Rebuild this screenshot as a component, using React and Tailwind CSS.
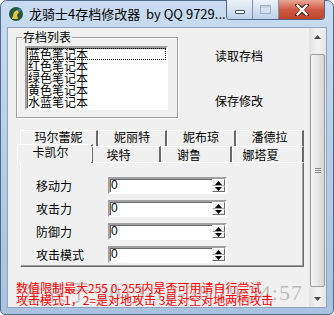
import React from "react";

function Spinner() {
  return (
    <div className="w-[13px] h-[13px] flex flex-col">
      <div className="h-[7px] bg-[#f0f0f0] border border-t-white border-l-white border-r-[#696969] border-b-[#a0a0a0] flex items-center justify-center">
        <svg width="7" height="4" viewBox="0 0 7 4"><path d="M0 4 L3.5 0 L7 4 Z" fill="#000" /></svg>
      </div>
      <div className="h-[6px] bg-[#f0f0f0] border border-t-white border-l-white border-r-[#696969] border-b-[#696969] flex items-center justify-center">
        <svg width="7" height="4" viewBox="0 0 7 4"><path d="M0 0 L3.5 4 L7 0 Z" fill="#000" /></svg>
      </div>
    </div>
  );
}

function Field({ label }) {
  return (
    <div className="flex items-center h-[17px]">
      <div className="w-[72px] text-[12px] leading-[14px] text-black">{label}</div>
      <div className="w-[119px] h-[17px] bg-white border-2 border-t-[#a0a0a0] border-l-[#a0a0a0] border-r-white border-b-white shadow-[inset_1px_1px_0_#696969] flex items-center">
        <span className="ml-[1px] text-[12px] leading-[13px] text-black font-['Liberation_Sans',sans-serif]">0</span>
        <div className="ml-auto">
          <Spinner />
        </div>
      </div>
    </div>
  );
}

export default function App() {
  const items = ["蓝色笔记本", "红色笔记本", "绿色笔记本", "黄色笔记本", "水蓝笔记本"];
  return (
    <div className="w-[334px] h-[315px] overflow-hidden bg-white">
      <div className="w-[334px] h-[315px] rounded-t-[7px] rounded-b-[5px] border border-[#51698b] bg-gradient-to-b from-[#c9dcf0] via-[#b6cde7] to-[#a8c2df] flex flex-col font-['Noto_Sans_CJK_SC',sans-serif]">
        {/* title bar */}
        <div className="h-[27px] flex items-start">
          <div className="ml-[7px] mt-[5px] w-[16px] h-[16px]">
            <svg width="16" height="16" viewBox="0 0 16 16">
              <circle cx="8" cy="8" r="7" fill="#24573f" />
              <path d="M4 13 L6 6 L9 4 L11 6 L9 9 L10 13 Z" fill="#e7c53a" />
              <path d="M9 4 L13 2 L12 6 Z" fill="#3a8ad0" />
            </svg>
          </div>
          <div className="ml-[5px] mt-[4px] text-[13px] leading-[17px] text-black whitespace-nowrap">
            龙骑士4存档修改器&nbsp; by QQ 9729...
          </div>
          <div className="ml-auto mr-[8px] -mt-[1px] flex h-[20px] rounded-b-[4px] border border-t-0 border-[#4f6889] overflow-hidden">
            <div className="w-[26px] h-full bg-gradient-to-b from-[#eef3fa] via-[#d6e2f0] to-[#bfd2e8] border-r border-[#7c93b3] flex items-end justify-center pb-[5px]">
              <div className="w-[10px] h-[4px] bg-white border border-[#3d5272] rounded-[1px]" />
            </div>
            <div className="w-[26px] h-full bg-gradient-to-b from-[#eef3fa] via-[#d6e2f0] to-[#bfd2e8] border-r border-[#7c93b3] flex items-center justify-center">
              <div className="w-[11px] h-[9px] border border-[#9fb0c6] bg-transparent shadow-[inset_0_2px_0_#c8d3e0]" />
            </div>
            <div className="w-[45px] h-full bg-gradient-to-b from-[#e8a597] via-[#cf5a44] to-[#c0432c] flex items-center justify-center">
              <svg width="14" height="12" viewBox="0 0 14 12">
                <path d="M2 1 L7 5 L12 1 M2 11 L7 7 L12 11" stroke="#5a2418" strokeWidth="4" fill="none" strokeLinecap="round" />
                <path d="M2.5 1.5 L11.5 10.5 M11.5 1.5 L2.5 10.5" stroke="#fff" strokeWidth="2.4" fill="none" strokeLinecap="round" />
              </svg>
            </div>
          </div>
        </div>

        {/* client */}
        <div className="mx-[7px] h-[279px] bg-[#f0f0f0] flex shadow-[0_0_0_1px_#8da3bf]">
          <div className="w-[301px] h-full flex flex-col relative">
            {/* top section */}
            <div className="h-[102px] flex items-start">
              <div className="ml-[8px] mt-[9px] w-[162px] h-[81px] relative border border-[#a0a0a0] shadow-[1px_1px_0_#fff,inset_1px_1px_0_#fff]">
                <div className="absolute left-[5px] -top-[8px] px-[1px] bg-[#f0f0f0] text-[12px] leading-[14px] text-black">存档列表</div>
                <div className="ml-[8px] mt-[8px] w-[143px] h-[64px] bg-white border-2 border-t-[#a0a0a0] border-l-[#a0a0a0] border-r-white border-b-white shadow-[inset_1px_1px_0_#696969] flex flex-col">
                  {items.map((t, i) => (
                    <div
                      key={t}
                      className={
                        i === 0
                          ? "h-[12px] text-[12px] leading-[12px] text-black outline outline-1 outline-dotted outline-black -outline-offset-1 pl-[1px] whitespace-nowrap"
                          : "h-[12px] text-[12px] leading-[12px] text-black pl-[1px] whitespace-nowrap"
                      }
                    >
                      {t}
                    </div>
                  ))}
                </div>
              </div>
              <div className="ml-[37px] pt-[22px] flex flex-col">
                <div className="text-[12px] leading-[12px] text-black">读取存档</div>
                <div className="mt-[33px] text-[12px] leading-[12px] text-black">保存修改</div>
              </div>
            </div>

            {/* tabs back row */}
            <div className="ml-[12px] flex h-[16px]">
              <div className="w-[78px] h-[16px] border-t border-l border-white border-r-2 border-r-[#696969] rounded-tl-[2px] flex items-start justify-center text-[12px] leading-[12px] text-black">玛尔蕾妮</div>
              <div className="w-[69px] h-[16px] border-t border-l border-white border-r-2 border-r-[#696969] rounded-tl-[2px] flex items-start justify-center text-[12px] leading-[12px] text-black">妮丽特</div>
              <div className="w-[69px] h-[16px] border-t border-l border-white border-r-2 border-r-[#696969] rounded-tl-[2px] flex items-start justify-center text-[12px] leading-[12px] text-black">妮布琼</div>
              <div className="w-[68px] h-[16px] border-t border-l border-white border-r-2 border-r-[#696969] rounded-tl-[2px] flex items-start justify-center text-[12px] leading-[12px] text-black">潘德拉</div>
            </div>
            {/* tabs front row */}
            <div className="ml-[12px] flex h-[16px] relative z-10">
              <div className="-ml-[3px] -mr-[2px] -mt-[2px] w-[76px] h-[19px] bg-[#f0f0f0] border-t border-l border-white border-r-2 border-r-[#696969] rounded-tl-[2px] flex items-start justify-center pt-[1px] pr-[8px] text-[12px] leading-[12px] text-black">卡凯尔</div>
              <div className="w-[70px] h-[16px] border-t border-l border-white border-r-2 border-r-[#696969] rounded-tl-[2px] flex items-center justify-center pr-[14px] text-[12px] leading-[12px] text-black">埃特</div>
              <div className="w-[71px] h-[16px] border-t border-l border-white border-r-2 border-r-[#696969] rounded-tl-[2px] flex items-center justify-center pr-[14px] text-[12px] leading-[12px] text-black">谢鲁</div>
              <div className="w-[72px] h-[16px] border-t border-l border-white border-r-2 border-r-[#696969] rounded-tl-[2px] flex items-center justify-center pr-[14px] text-[12px] leading-[12px] text-black">娜塔夏</div>
            </div>
            {/* panel */}
            <div className="ml-[12px] w-[284px] h-[105px] border border-t-white border-l-white border-r-[#696969] border-b-[#696969] shadow-[inset_-1px_-1px_0_#a0a0a0] pt-[14px] pl-[15px] flex flex-col gap-[6px]">
              <Field label="移动力" />
              <Field label="攻击力" />
              <Field label="防御力" />
              <Field label="攻击模式" />
            </div>

            {/* watermark (behind notes) */}
            <div className="absolute left-[14px] top-[251px] text-[22px] leading-[28px] tracking-[1px] text-[#9a9a9a]/60 font-['Liberation_Serif',serif] whitespace-nowrap pointer-events-none">
              发表于 2013-12-28 19:34:57
            </div>
            {/* red notes */}
            <div className="relative ml-[8px] mt-[15px] flex flex-col text-[12px] leading-[12px] text-[#f00] whitespace-nowrap">
              <div>数值限制最大255 0-255内是否可用请自行尝试</div>
              <div>攻击模式1，2=是对地攻击 3是对空对地两栖攻击</div>
            </div>
          </div>

          {/* scrollbar */}
          <div className="w-[17px] h-full flex flex-col bg-gradient-to-r from-[#e3e3e3] via-[#f2f2f2] to-[#e6e6e6]">
            <div className="h-[17px] flex items-center justify-center">
              <svg width="7" height="4" viewBox="0 0 7 4"><path d="M0 4 L3.5 0 L7 4 Z" fill="#4a4a4a" /></svg>
            </div>
            <div className="h-[9px]" />
            <div className="mx-[1px] h-[233px] rounded-[2px] border border-[#9c9c9c] bg-gradient-to-r from-[#f4f4f4] via-[#e8e8e8] to-[#d4d4d4] flex flex-col items-center justify-center gap-[1px]">
              <div className="w-[6px] h-[1px] bg-[#8a8a8a]" />
              <div className="w-[6px] h-[1px] bg-[#8a8a8a]" />
              <div className="w-[6px] h-[1px] bg-[#8a8a8a]" />
            </div>
            <div className="h-[3px]" />
            <div className="h-[17px] flex items-center justify-center">
              <svg width="7" height="4" viewBox="0 0 7 4"><path d="M0 0 L3.5 4 L7 0 Z" fill="#4a4a4a" /></svg>
            </div>
          </div>
        </div>
      </div>
    </div>
  );
}
